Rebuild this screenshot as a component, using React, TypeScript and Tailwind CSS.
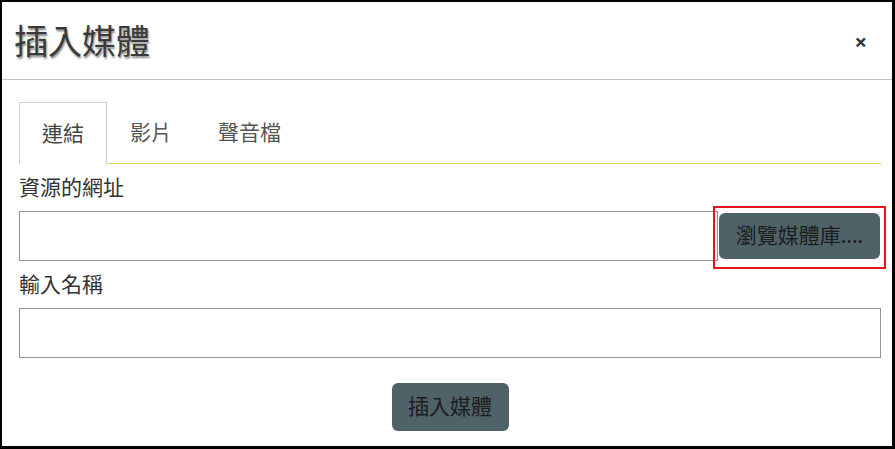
export default function App() {
  return (
    <div
      className="flex h-[449px] w-[895px] flex-col border-t-2 border-b-[3px] border-l-2 border-r-[3px] border-black bg-white text-[#333]"
      style={{ fontFamily: '"Noto Sans", "Noto Sans CJK TC", sans-serif' }}
    >
      {/* header */}
      <div className="flex h-[78px] shrink-0 items-center justify-between border-b border-[#c4c4c4] pl-[12px] pr-[25px]">
        <h1 className="text-[34px] leading-none font-normal text-[#3a3a3a] [text-shadow:1px_2px_2px_rgba(0,0,0,0.45)]">
          插入媒體
        </h1>
        <button className="text-[22px] leading-none font-bold text-[#2f3a45]">
          ×
        </button>
      </div>

      <div className="flex flex-1 flex-col pl-[17px] pr-[11px] pt-[22px]">
        {/* tabs */}
        <div className="flex border-b border-[#f7d24a]">
          <div className="-mb-px flex h-[62px] items-center justify-center border border-b-0 border-[#cfcfcf] bg-white px-[22px] text-[21px] text-[#444]">
            連結
          </div>
          <div className="flex h-[61px] items-center justify-center px-[23px] text-[21px] text-[#555]">
            影片
          </div>
          <div className="flex h-[61px] items-center justify-center px-[23px] text-[21px] text-[#555]">
            聲音檔
          </div>
        </div>

        <label className="mt-[8px] mb-[9px] block h-[30px] text-[21px] leading-[30px] text-[#333]">
          資源的網址
        </label>
        <div className="flex h-[50px]">
          <input className="h-[50px] flex-1 border border-[#8d949b] outline-none" />
          <div className="relative ml-px flex h-[50px] w-[162px] items-center">
            <button className="h-[46px] w-[161px] rounded-[6px] bg-[#4f6268] text-[21px] text-[#1c1c1c]">
              瀏覽媒體庫....
            </button>
            <div className="pointer-events-none absolute top-[-5px] right-[-5px] bottom-[-8px] left-[-6px] border-2 border-[#e5161b]" />
          </div>
        </div>

        <label className="mt-[8px] mb-[9px] block h-[30px] text-[21px] leading-[30px] text-[#333]">
          輸入名稱
        </label>
        <input className="h-[50px] w-full border border-[#8d949b] outline-none" />

        <div className="mt-[25px] flex justify-center">
          <button className="h-[48px] w-[117px] rounded-[6px] bg-[#4f6268] text-[21px] text-[#1c1c1c]">
            插入媒體
          </button>
        </div>
      </div>
    </div>
  );
}
